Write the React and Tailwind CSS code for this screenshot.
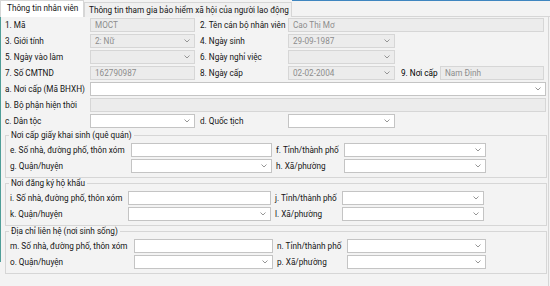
import React from "react";

function Chevron() {
  return (
    <svg width="6" height="4" viewBox="0 0 6 4" className="shrink-0">
      <path d="M0.5 0.5 L3 3 L5.5 0.5" fill="none" stroke="#8a8a8a" strokeWidth="0.9" />
    </svg>
  );
}

function Field({ w, disabled, select, value }) {
  const base = disabled
    ? "bg-[#ececec] border-[#d6d6d6]"
    : "bg-white border-[#c4c4c4]";
  return (
    <div className={`${w} h-[14px] shrink-0 border ${base} flex items-center justify-between pl-[4px] pr-[4px]`}>
      <span className="text-[8.2px] leading-[12px] text-[#8c8c8c] whitespace-nowrap">{value}</span>
      {select && <Chevron />}
    </div>
  );
}

function Label({ w, children, bold }) {
  return (
    <div className={`${w} shrink-0 text-[8.2px] leading-[14px] whitespace-nowrap ${bold ? "text-black" : "text-[#141414]"}`}>
      {children}
    </div>
  );
}

function Row({ children }) {
  return <div className="flex items-start h-[16px] pl-[4px]">{children}</div>;
}

function Group({ legend, lw1, fw1, lw2, fw2, a, b, c, d }) {
  return (
    <fieldset className="ml-[4px] w-[542px] h-[48px] border border-[#d6d6d6] px-[3px] pb-[2px]">
      <legend className="px-[2px] text-[8.2px] leading-[11px] text-[#141414]">{legend}</legend>
      <div className="pt-[2px]">
        <div className="flex items-start h-[16px]">
          <Label w={lw1}>{a}</Label>
          <Field w={fw1} />
          <Label w={lw2}>{b}</Label>
          <Field w={fw2} select />
        </div>
        <div className="flex items-start h-[16px]">
          <Label w={lw1}>{c}</Label>
          <Field w={fw1} select />
          <Label w={lw2}>{d}</Label>
          <Field w={fw2} select />
        </div>
      </div>
    </fieldset>
  );
}

export default function App() {
  return (
    <div className="w-[550px] h-[286px] bg-[#f3f3f3] overflow-hidden font-['Roboto',sans-serif] text-[8.2px]">
      {/* tab strip */}
      <div className="flex items-end h-[17px]">
        <div className="w-[84px] h-[17px] bg-white border border-b-0 border-[#d6d6d6] pl-[6px] leading-[15px] text-[#141414] whitespace-nowrap">
          Thông tin nhân viên
        </div>
        <div className="w-[208px] h-[15px] bg-[#f0f0f0] border border-b-0 border-[#d6d6d6] pl-[4px] leading-[14px] text-[#141414] whitespace-nowrap">
          Thông tin tham gia bảo hiểm xã hội của người lao động
        </div>
        <div className="flex-1 h-[17px] border-t border-[#3f86c0] border-b border-b-[#d6d6d6]"></div>
      </div>
      {/* panel */}
      <div className="flex w-[549px] h-[269px] border-r border-[#d6d6d6]">
        <div className="w-[1px] h-[245px] shrink-0 bg-[#4f9e98]"></div>
        <div className="flex-1 pt-[1px]">
          <Row>
            <Label w="w-[85px]">1. Mã</Label>
            <Field w="w-[105px]" disabled value="MOCT" />
            <Label w="w-[93px] pl-[5px]">2. Tên cán bộ nhân viên</Label>
            <Field w="w-[256px]" disabled value="Cao Thị Mơ" />
          </Row>
          <Row>
            <Label w="w-[85px]">3. Giới tính</Label>
            <Field w="w-[105px]" disabled select value="2: Nữ" />
            <Label w="w-[93px] pl-[5px]">4. Ngày sinh</Label>
            <Field w="w-[107px]" disabled select value="29-09-1987" />
          </Row>
          <Row>
            <Label w="w-[85px]">5. Ngày vào làm</Label>
            <Field w="w-[105px]" disabled select value="" />
            <Label w="w-[93px] pl-[5px]">6. Ngày nghỉ việc</Label>
            <Field w="w-[107px]" disabled select value="" />
          </Row>
          <Row>
            <Label w="w-[85px]">7. Số CMTND</Label>
            <Field w="w-[105px]" disabled value="162790987" />
            <Label w="w-[93px] pl-[5px]">8. Ngày cấp</Label>
            <Field w="w-[107px]" disabled select value="02-02-2004" />
            <Label w="w-[45px] pl-[6px]" bold>9. Nơi cấp</Label>
            <Field w="w-[104px]" disabled value="Nam Định" />
          </Row>
          <Row>
            <Label w="w-[85px]">a. Nơi cấp (Mã BHXH)</Label>
            <Field w="w-[456px]" select />
          </Row>
          <Row>
            <Label w="w-[85px]">b. Bộ phận hiện thời</Label>
            <Field w="w-[456px]" disabled />
          </Row>
          <Row>
            <Label w="w-[85px]">c. Dân tộc</Label>
            <Field w="w-[105px]" select />
            <Label w="w-[93px] pl-[5px]">d. Quốc tịch</Label>
            <Field w="w-[107px]" select />
          </Row>
          <Group
            legend="Nơi cấp giấy khai sinh (quê quán)"
            lw1="w-[122px] pl-[1px]" fw1="w-[141px]" lw2="w-[72px] pl-[4px]" fw2="w-[142px]"
            a="e. Số nhà, đường phố, thôn xóm" b="f. Tỉnh/thành phố"
            c="g. Quận/huyện" d="h. Xã/phường"
          />
          <Group
            legend="Nơi đăng ký hộ khẩu"
            lw1="w-[119px] pl-[1px]" fw1="w-[143px]" lw2="w-[71px] pl-[4px]" fw2="w-[142px]"
            a="i. Số nhà, đường phố, thôn xóm" b="j. Tỉnh/thành phố"
            c="k. Quận/huyện" d="l. Xã/phường"
          />
          <Group
            legend="Địa chỉ liên hệ (nơi sinh sống)"
            lw1="w-[125px] pl-[1px]" fw1="w-[139px]" lw2="w-[74px] pl-[4px]" fw2="w-[139px]"
            a="m. Số nhà, đường phố, thôn xóm" b="n. Tỉnh/thành phố"
            c="o. Quận/huyện" d="p. Xã/phường"
          />
        </div>
      </div>
    </div>
  );
}
